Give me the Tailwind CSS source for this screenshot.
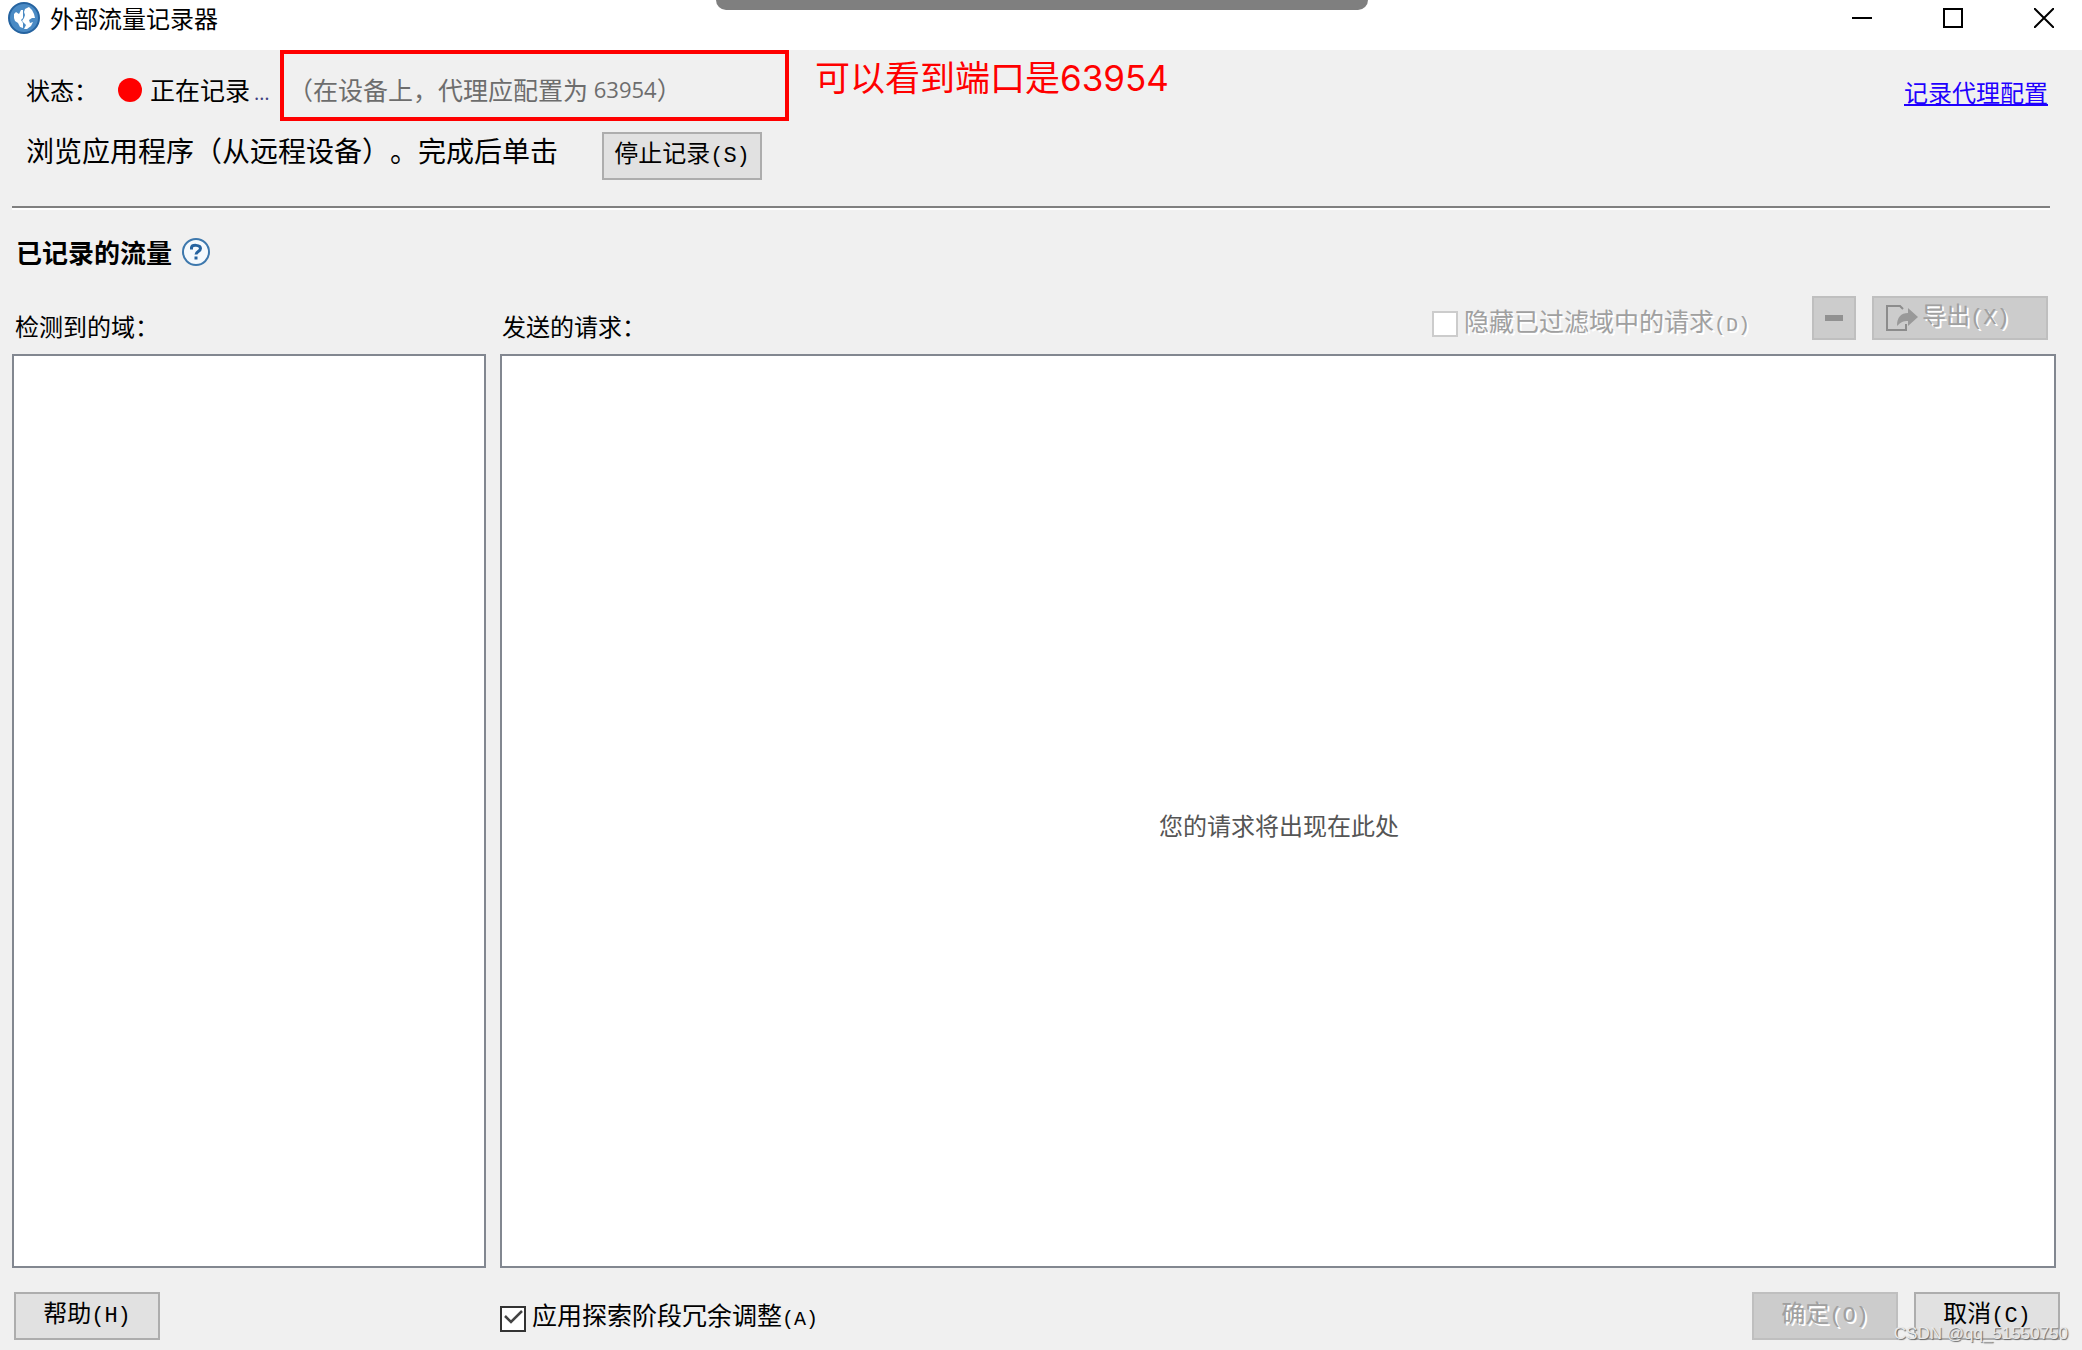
<!DOCTYPE html>
<html lang="zh-CN">
<head>
<meta charset="utf-8">
<meta name="viewport" content="width=device-width, initial-scale=1">
<title>外部流量记录器</title>
<script src="https://cdn.jsdelivr.net/npm/@tailwindcss/browser@4"></script>
</head>
<body class="relative flex min-h-screen flex-col bg-[#f0f0f0] font-['Noto_Sans_CJK_SC',sans-serif] text-2xl leading-8 text-black [text-spacing-trim:space-all]">

<div class="absolute top-0 left-[716px] h-2.5 w-[652px] rounded-b-2xl bg-[#7f7f7f]"></div>

<header class="flex h-[50px] items-center bg-white pr-7 pb-3.5 pl-2">
  <svg class="size-8" viewBox="0 0 32 32" aria-hidden="true">
    <circle cx="16" cy="16" r="15" fill="#4a8ac4" stroke="#2563a0" stroke-width="2"/>
    <path d="M6 12l2-2 3 2 2-4h2v8l-2 2 2 3v5l-3-1-2-4-3-2-1-3z" fill="#fff"/>
    <path d="M17 7l4-2 3 3 2 4 1 4-3 0-3 2 1 3 3-1-2 4-4 3-3 0 2-4-2-2-2-2 2-3 1-3-1-3z" fill="#fff"/>
  </svg>
  <h1 class="ml-2.5">外部流量记录器</h1>
  <div class="ml-auto flex items-center gap-[71px]">
    <button aria-label="最小化" class="flex size-5 items-center"><span class="h-0.5 w-5 bg-black"></span></button>
    <button aria-label="最大化" class="size-5 border-2 border-black"></button>
    <button aria-label="关闭" class="size-5"><svg class="size-5" viewBox="0 0 20 20" fill="none" stroke="#000" stroke-width="2"><path d="M0 0L20 20M20 0L0 20"/></svg></button>
  </div>
</header>

<section class="flex h-20 items-center pr-[34px] pl-[26px]">
  <span class="w-[92px]">状态：</span>
  <span class="size-6 rounded-full bg-[red]"></span>
  <span class="ml-2 w-[130px] text-[25px]">正在记录<span class="ml-1 font-['Open_Sans'] text-xl text-[#404080]">…</span></span>
  <div class="flex h-[71px] w-[509px] items-center self-start border-4 border-[red] pt-1.5 pl-1 text-[25px] whitespace-pre text-[#6d6d6d]">（在设备上，代理应配置为<span class="font-['Open_Sans'] text-[22px]"> 63954</span>）</div>
  <p class="ml-[26px] self-start text-[35px] leading-[52px] text-[red]">可以看到端口是<span class="font-['Inter']">63954</span></p>
  <a href="#" class="mt-1 ml-auto text-[#1f00ff] underline decoration-2 underline-offset-2">记录代理配置</a>
</section>

<section class="flex h-[76px] items-start pl-[26px]">
  <p class="text-[28px] leading-10">浏览应用程序（从远程设备）。完成后单击</p>
  <button class="mt-0.5 ml-11 h-12 w-40 border-2 border-[#adadad] bg-[#e1e1e1] pb-1">停止记录<span class="font-['Liberation_Mono'] text-[22px]">(S)</span></button>
</section>

<hr class="mr-8 ml-3 h-1 border-t-2 border-b-2 border-t-[#808080] border-b-white">

<main class="flex flex-1 flex-col pr-[26px] pl-3">
  <div class="mt-7 flex h-7 items-center pl-1">
    <h2 class="text-[26px] font-bold">已记录的流量</h2>
    <button aria-label="帮助" class="ml-2.5 size-7"><svg class="size-7" viewBox="0 0 28 28"><circle cx="14" cy="14" r="13" fill="#f4f9fd" stroke="#3d78ad" stroke-width="2"/><path d="M9.500 11.500V9.500C10 6.500 18.500 6.500 18.500 10.500c0 3-4.500 3-4.500 6" fill="none" stroke="#2563a0" stroke-width="3"/><rect x="12.500" y="18.500" width="3" height="3" fill="#2563a0"/></svg></button>
  </div>

  <div class="mt-[30px] grid flex-1 grid-cols-[474px_1fr] grid-rows-[58px_1fr] gap-x-3.5">
    <h3 class="pt-3.5 pl-[3px]">检测到的域：</h3>
    <div class="flex items-start pr-2">
      <h3 class="pt-3.5 pl-0.5">发送的请求：</h3>
      <label class="mt-2 mr-[62px] ml-auto flex items-center text-[25px] text-[#a0a0a0] [text-shadow:2px_2px_0_#fff]">
        <input type="checkbox" disabled class="mt-1 mr-1.5 size-[26px] appearance-none border-2 border-[#ccc] bg-white">
        <span>隐藏已过滤域中的请求<span class="font-['Liberation_Mono'] text-xl">(D)</span></span>
      </label>
      <button disabled aria-label="移除" class="flex h-11 w-11 items-center justify-center border-2 border-[#bfbfbf] bg-[#ccc]"><span class="h-1.5 w-[18px] bg-[#919191]"></span></button>
      <button disabled class="ml-4 flex h-11 w-44 items-center border-2 border-[#bfbfbf] bg-[#ccc] pl-3 text-[#a0a0a0] [text-shadow:2px_2px_0_#fff]">
        <svg class="mr-1 h-7 w-8" viewBox="0 0 32 28" aria-hidden="true"><path d="M20 20V26H1V2h13l3 3" fill="none" stroke="#8c8c8c" stroke-width="2"/><path d="M11 22c0-9 4-13 11-13V4l10 9-10 9v-5c-5 0-7 1-11 5z" fill="#999"/></svg><span class="pb-1">导出<span class="font-['Liberation_Mono'] text-[22px]">(X)</span></span>
      </button>
    </div>
    <div class="border-2 border-[#828790] bg-white"></div>
    <div class="flex items-center justify-center border-2 border-[#828790] bg-white pt-7 pl-0.5 text-[#555]">您的请求将出现在此处</div>
  </div>
</main>

<footer class="grid grid-cols-[474px_1fr] gap-x-3.5 pt-6 pr-[22px] pb-2.5 pl-3">
  <button class="ml-0.5 h-12 w-[146px] border-2 border-[#adadad] bg-[#e1e1e1] pb-1">帮助<span class="font-['Liberation_Mono'] text-[22px]">(H)</span></button>
  <div class="flex items-center gap-4">
    <label class="relative mr-auto flex items-center text-[25px]">
      <input type="checkbox" checked class="mt-1.5 mr-1.5 size-[26px] appearance-none border-2 border-[#333] bg-white">
      <svg class="pointer-events-none absolute top-[9px] left-1 size-5" viewBox="0 0 20 20" fill="none" stroke="#444" stroke-width="2.500" aria-hidden="true"><path d="M1 9l6 6L18 4"/></svg>
      <span>应用探索阶段冗余调整<span class="font-['Liberation_Mono'] text-xl">(A)</span></span>
    </label>
    <button disabled class="h-12 w-[146px] border-2 border-[#bfbfbf] bg-[#ccc] pb-1 text-[#a0a0a0] [text-shadow:2px_2px_0_#fff]">确定<span class="font-['Liberation_Mono'] text-[22px]">(O)</span></button>
    <button class="h-12 w-[146px] border-2 border-[#adadad] bg-[#e1e1e1] pb-1">取消<span class="font-['Liberation_Mono'] text-[22px]">(C)</span></button>
  </div>
</footer>

<div class="absolute right-3.5 bottom-1 font-['Liberation_Sans'] text-[17px] leading-6 text-[#e8e8e8] [text-shadow:1px_1px_1px_#666]">CSDN @qq_51550750</div>
</body>
</html>
